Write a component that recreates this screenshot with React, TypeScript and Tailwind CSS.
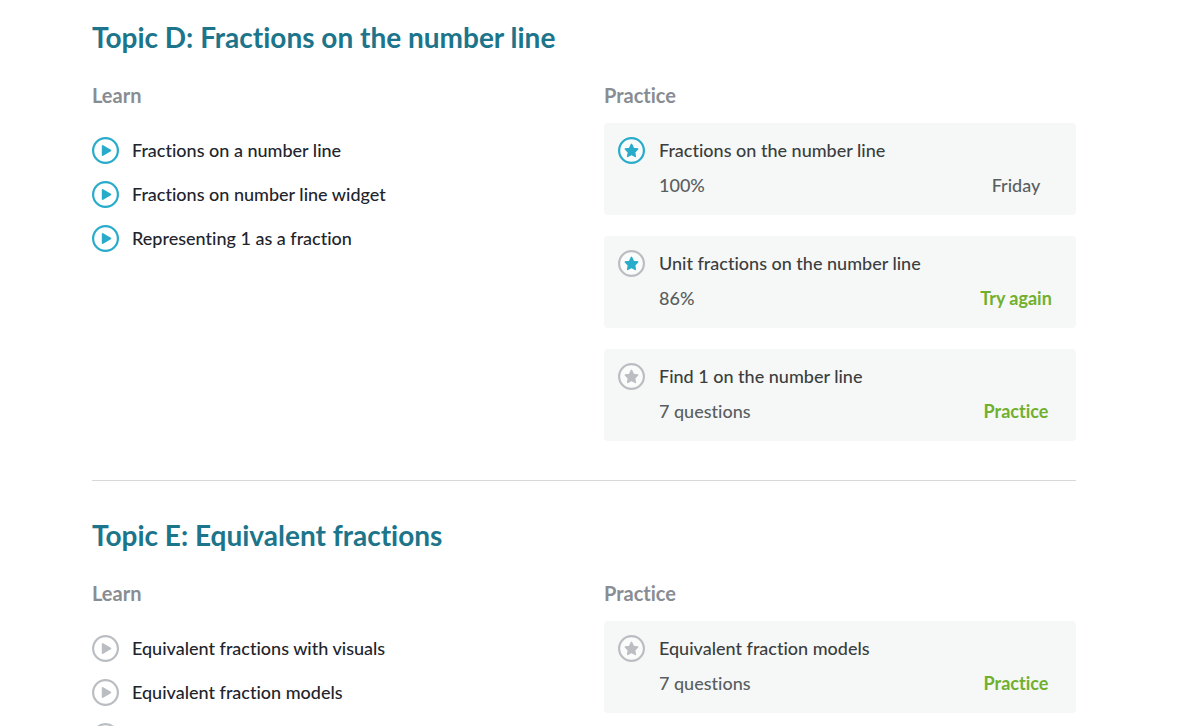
type Tone = "active" | "idle";

type Video = { id: number; title?: string };

type Exercise = {
  title: string;
  detail: string;
  ring: Tone;
  star: Tone;
  action?: string;
  day?: string;
};

type Topic = {
  title: string;
  videoTone: Tone;
  videos: Video[];
  exercises: Exercise[];
};

const tones = { active: "#29abca", idle: "#babec2" };

const topics: Topic[] = [
  {
    title: "Topic D: Fractions on the number line",
    videoTone: "active",
    videos: [
      { id: 1, title: "Fractions on a number line" },
      { id: 2, title: "Fractions on number line widget" },
      { id: 3, title: "Representing 1 as a fraction" },
    ],
    exercises: [
      { title: "Fractions on the number line", detail: "100%", ring: "active", star: "active", day: "Friday" },
      { title: "Unit fractions on the number line", detail: "86%", ring: "idle", star: "active", action: "Try again" },
      { title: "Find 1 on the number line", detail: "7 questions", ring: "idle", star: "idle", action: "Practice" },
    ],
  },
  {
    title: "Topic E: Equivalent fractions",
    videoTone: "idle",
    videos: [
      { id: 4, title: "Equivalent fractions with visuals" },
      { id: 5, title: "Equivalent fraction models" },
      { id: 6 },
    ],
    exercises: [
      { title: "Equivalent fraction models", detail: "7 questions", ring: "idle", star: "idle", action: "Practice" },
    ],
  },
];

function PlayIcon({ tone }: { tone: Tone }) {
  return (
    <svg className="size-[27px] shrink-0" viewBox="0 0 27 27" fill="none" aria-hidden="true">
      <circle cx="13.5" cy="13.5" r="12.4" stroke={tones[tone]} strokeWidth="2.2" />
      <path
        d="M10.7 8.9v9.2l7.7-4.6z"
        fill={tones[tone]}
        stroke={tones[tone]}
        strokeWidth="1.8"
        strokeLinejoin="round"
      />
    </svg>
  );
}

function StarIcon({ ring, star }: { ring: Tone; star: Tone }) {
  return (
    <svg className="size-[27px] shrink-0" viewBox="0 0 27 27" aria-hidden="true">
      <circle cx="13.5" cy="13.5" r="12.4" fill="#fafbfb" stroke={tones[ring]} strokeWidth="2.2" />
      <path
        d="M13.5 7.4l1.9 4 4.3.6-3.1 3.1.7 4.3-3.8-2-3.8 2 .7-4.3-3.1-3.1 4.3-.6z"
        fill={tones[star]}
        stroke={tones[star]}
        strokeWidth="1.5"
        strokeLinejoin="round"
      />
    </svg>
  );
}

function ExerciseCard({ exercise }: { exercise: Exercise }) {
  return (
    <li className="flex gap-3.5 rounded bg-[#f6f8f7] pt-3.5 pr-3 pb-4 pl-3.5">
      <StarIcon ring={exercise.ring} star={exercise.star} />
      <div className="flex grow flex-col gap-2">
        <a href="#" className="leading-[26px] text-[#3b3e40]">
          {exercise.title}
        </a>
        <div className="flex items-center justify-between leading-7 text-[#5a5e61]">
          <span>{exercise.detail}</span>
          <span className="w-24 text-center">
            {exercise.action ? (
              <button type="button" className="font-bold text-[#71b02d]">
                {exercise.action}
              </button>
            ) : (
              exercise.day
            )}
          </span>
        </div>
      </div>
    </li>
  );
}

function TopicSection({ topic }: { topic: Topic }) {
  return (
    <section className="border-b border-[#d6d8da] pt-9 pb-[39px]">
      <h2 className="text-[28px] leading-9 font-bold text-[#1c758a]">{topic.title}</h2>
      <div className="mt-[26px] grid grid-cols-2 gap-10">
        <div>
          <h3 className="text-[20px] leading-7 font-bold text-[#888d93]">Learn</h3>
          <ul className="mt-[27px] flex flex-col gap-4">
            {topic.videos.map((video) => (
              <li key={video.id}>
                <a href="#" className="flex h-7 items-center gap-[13px] text-[#21242c]">
                  <PlayIcon tone={topic.videoTone} />
                  {video.title}
                </a>
              </li>
            ))}
          </ul>
        </div>
        <div>
          <h3 className="text-[20px] leading-7 font-bold text-[#888d93]">Practice</h3>
          <ul className="mt-[14px] flex flex-col gap-[21px]">
            {topic.exercises.map((exercise) => (
              <ExerciseCard key={exercise.title} exercise={exercise} />
            ))}
          </ul>
        </div>
      </div>
    </section>
  );
}

export default function App() {
  return (
    <main className="h-screen overflow-hidden bg-white pr-[124px] pl-[92px] font-['Lato',sans-serif] text-[18px] font-medium [font-variant-ligatures:none]">
      <div className="-mt-[17px]">
        {topics.map((topic) => (
          <TopicSection key={topic.title} topic={topic} />
        ))}
      </div>
    </main>
  );
}
